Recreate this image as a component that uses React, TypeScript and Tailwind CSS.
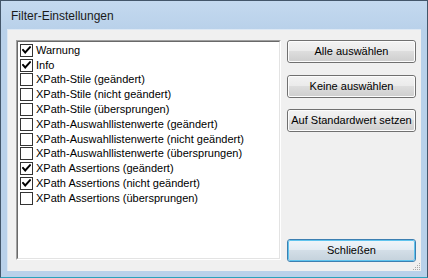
import React from "react";

const items: { label: string; checked: boolean }[] = [
  { label: "Warnung", checked: true },
  { label: "Info", checked: true },
  { label: "XPath-Stile (geändert)", checked: false },
  { label: "XPath-Stile (nicht geändert)", checked: false },
  { label: "XPath-Stile (übersprungen)", checked: false },
  { label: "XPath-Auswahllistenwerte (geändert)", checked: false },
  { label: "XPath-Auswahllistenwerte (nicht geändert)", checked: false },
  { label: "XPath-Auswahllistenwerte (übersprungen)", checked: false },
  { label: "XPath Assertions (geändert)", checked: true },
  { label: "XPath Assertions (nicht geändert)", checked: true },
  { label: "XPath Assertions (übersprungen)", checked: false },
];

function CheckBox({ checked }: { checked: boolean }) {
  return (
    <div className="w-[13px] h-[13px] border border-[#333333] bg-white flex items-center justify-center shrink-0">
      {checked && (
        <svg width="9" height="9" viewBox="0 0 9 9">
          <path d="M1 4 L3.2 6.5 L8 1.2" stroke="#000" strokeWidth="1.9" fill="none" strokeLinecap="square" />
        </svg>
      )}
    </div>
  );
}

function Btn({ label, className = "", def = false }: { label: string; className?: string; def?: boolean }) {
  return (
    <div
      className={
        "h-[23px] w-full rounded-[3px] border flex items-center justify-center relative overflow-hidden " +
        (def ? "border-[#3c7fb1] " : "border-[#707070] ") +
        className
      }
    >
      <div
        className={
          "absolute inset-0 rounded-[2px] border " +
          (def
            ? "border-[#5fc4ee] bg-[linear-gradient(to_bottom,#eef4f9_0%,#e3ecf3_45%,#d3dee7_50%,#c6d3dd_100%)]"
            : "border-[#fcfcfc] bg-[linear-gradient(to_bottom,#f2f2f2_0%,#ebebeb_45%,#dddddd_50%,#cfcfcf_100%)]")
        }
      />
      <span className="relative text-[11px] text-black leading-none">{label}</span>
    </div>
  );
}

export default function App() {
  return (
    <div
      className="w-[428px] h-[278px] flex flex-col bg-[#bcd3ec] border border-[#43566a] border-b-[#2aa2bc] overflow-hidden"
      style={{ fontFamily: '"Liberation Sans", Arial, sans-serif' }}
    >
      <div className="h-[28px] shrink-0 flex items-center pl-[10px] bg-[linear-gradient(to_bottom,#c4d9ef,#b9d1ea)]">
        <span className="text-[12px] text-[#1a1a1a] pt-[2px]">Filter-Einstellungen</span>
      </div>
      <div className="flex-1 flex px-[6px] pb-[6px] bg-[#b9d1ea]">
        <div className="flex-1 flex bg-[#f0f0f0] border-l border-t border-[#dde8f4] pl-[8px] pt-[10px] pr-[2px] relative">
          <div className="w-[265px] mb-[11px] border border-t-[#a0a0a0] border-l-[#a0a0a0] border-r-white border-b-white">
            <div className="w-full h-full bg-white border border-t-[#696969] border-l-[#696969] border-r-[#e3e3e3] border-b-[#e3e3e3] pt-[1px] pl-[2px]">
              {items.map((it) => (
                <div key={it.label} className="h-[14.8px] flex items-center gap-[3px]">
                  <CheckBox checked={it.checked} />
                  <span className="text-[11px] text-black whitespace-nowrap leading-none">{it.label}</span>
                </div>
              ))}
            </div>
          </div>
          <div className="w-[129px] ml-[6px] mb-[9px] flex flex-col">
            <Btn label="Alle auswählen" />
            <Btn label="Keine auswählen" className="mt-[12px]" />
            <Btn label="Auf Standardwert setzen" className="mt-[11px]" />
            <div className="flex-1" />
            <Btn label="Schließen" def />
          </div>
          <svg className="absolute right-0 bottom-0" width="10" height="10" viewBox="0 0 10 10">
            <g fill="#a8a8a8">
              <rect x="8" y="2" width="1" height="1" />
              <rect x="6" y="4" width="1" height="1" />
              <rect x="8" y="4" width="1" height="1" />
              <rect x="4" y="6" width="1" height="1" />
              <rect x="6" y="6" width="1" height="1" />
              <rect x="8" y="6" width="1" height="1" />
              <rect x="2" y="8" width="1" height="1" />
              <rect x="4" y="8" width="1" height="1" />
              <rect x="6" y="8" width="1" height="1" />
              <rect x="8" y="8" width="1" height="1" />
            </g>
          </svg>
        </div>
      </div>
    </div>
  );
}
